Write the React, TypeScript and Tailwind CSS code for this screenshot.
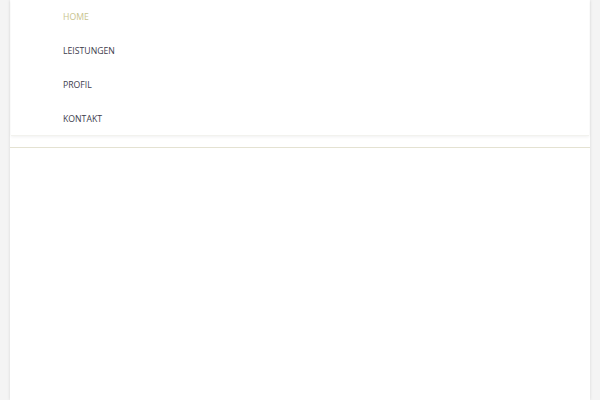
import React from "react";

export default function App() {
  const items = ["HOME", "LEISTUNGEN", "PROFIL", "KONTAKT"];
  return (
    <div className="h-[400px] w-[600px] overflow-hidden bg-[#f4f4f4] px-[10px]" style={{ fontFamily: '"Open Sans", sans-serif' }}>
      <div className="h-full bg-white shadow-[0_0_3px_rgba(0,0,0,0.12)]">
        <div className="mx-px bg-white shadow-[0_1px_3px_rgba(0,0,0,0.06)] border-b border-[#f2f2ee]">
          <ul className="flex flex-col pl-[52px]">
            {items.map((t, i) => (
              <li key={t} className={`flex h-[33.75px] items-center pt-[2px] text-[8.7px] ${i === 0 ? "text-[#c8c38e]" : "text-[#3d3c4c]"}`}>
                {t}
              </li>
            ))}
          </ul>
        </div>
        <div className="mt-[11px] h-px bg-[#e4e2d2]" />
      </div>
    </div>
  );
}
